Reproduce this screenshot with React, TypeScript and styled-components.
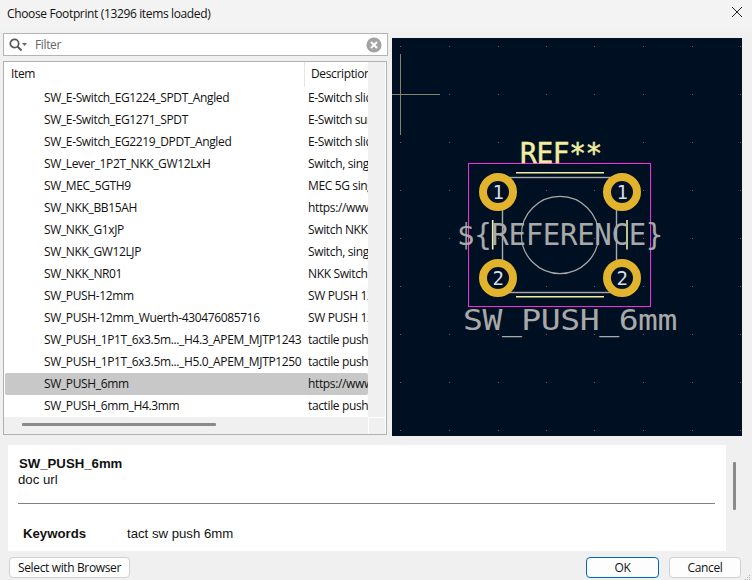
import React from 'react';
import styled, { createGlobalStyle } from 'styled-components';

const GlobalStyle = createGlobalStyle`
  html, body {
    margin: 0;
    padding: 0;
    background: #f0f0f0;
  }
`;

const uiFont = `'Open Sans', 'Noto Sans', sans-serif`;
const strokeFont = `'DejaVu Sans Mono', 'Liberation Mono', monospace`;

const Dialog = styled.div`
  position: relative;
  width: 752px;
  height: 580px;
  overflow: hidden;
  display: flex;
  flex-direction: column;
  background: #f0f0f0;
  color: #111;
  font-family: ${uiFont};
  font-size: 12px;
  letter-spacing: -0.36px;
`;

const TitleBar = styled.div`
  height: 33px;
  flex: none;
  display: flex;
  justify-content: space-between;
  padding: 6px 10px 0 7px;
  box-sizing: border-box;
  background: linear-gradient(#f3f3f3 85%, #f0f0f0);
`;

const TitleText = styled.span`
  line-height: 15px;
`;

const CloseIcon = styled.svg`
  width: 10px;
  height: 10px;
  margin-top: 1px;
`;

const MainRow = styled.div`
  display: flex;
  padding-left: 3px;
  gap: 4px;
  flex: none;
`;

const LeftColumn = styled.div`
  width: 385px;
  display: flex;
  flex-direction: column;
  gap: 5px;
`;

const FilterBox = styled.div`
  height: 23px;
  box-sizing: border-box;
  border: 1px solid #b4b4b4;
  background: #fff;
  display: flex;
  align-items: center;
  padding: 0 5px;
`;

const FilterText = styled.span`
  margin-left: 8px;
  flex: 1;
  color: #666;
`;

const ListBox = styled.div`
  width: 384px;
  height: 374px;
  box-sizing: border-box;
  border: 1px solid #b0b0b0;
  background: #fff;
  display: grid;
  grid-template-columns: 364px 17px;
  grid-template-rows: 355px 1fr;
`;

const Table = styled.div`
  overflow: hidden;
  display: flex;
  flex-direction: column;
`;

const HeaderRow = styled.div`
  height: 25px;
  flex: none;
  display: grid;
  grid-template-columns: 300px 1fr;
  line-height: 24px;
`;

const HeaderCell = styled.div<{ $divider?: boolean }>`
  padding-left: ${(p) => (p.$divider ? '6px' : '7px')};
  border-left: ${(p) => (p.$divider ? '1px solid #e4e4e4' : 'none')};
  white-space: nowrap;
  overflow: hidden;
`;

const Row = styled.div<{ $selected?: boolean }>`
  height: 22px;
  flex: none;
  margin-left: 1px;
  display: grid;
  grid-template-columns: 303px 1fr;
  line-height: 22px;
  border-radius: 2px;
  background: ${(p) => (p.$selected ? '#c8c8c8' : 'transparent')};
`;

const NameCell = styled.div`
  padding-left: 39px;
  white-space: nowrap;
  overflow: hidden;
`;

const DescCell = styled.div`
  white-space: nowrap;
  overflow: hidden;
`;

const VerticalTrack = styled.div`
  background: #f0f0f0;
`;

const HorizontalTrack = styled.div`
  background: #f0f0f0;
  padding: 6px 0 0 18px;
`;

const HorizontalThumb = styled.div`
  width: 194px;
  height: 3px;
  border-radius: 1px;
  background: #8a8a8a;
`;

const ScrollCorner = styled.div`
  background: #f0f0f0;
  border-left: 1px solid #fff;
  border-top: 1px solid #fff;
`;

const Canvas = styled.svg`
  display: block;
  flex: none;
  margin-top: 5px;
  width: 350px;
  height: 398px;
`;

const DetailsRow = styled.div`
  margin-top: 9px;
  padding-left: 8px;
  display: flex;
  flex: none;
`;

const DetailsPanel = styled.div`
  width: 718px;
  height: 106px;
  box-sizing: border-box;
  background: #fff;
  padding: 11px 11px 0 10px;
  font-family: 'Liberation Sans', Arial, sans-serif;
  font-size: 13.2px;
  letter-spacing: 0;
`;

const DetailsTitle = styled.div`
  font-weight: 700;
  line-height: 16px;
  margin-left: 1px;
`;

const DetailsDoc = styled.div`
  line-height: 15px;
`;

const Rule = styled.hr`
  border: 0;
  height: 1px;
  background: #808080;
  margin: 16px 0 0;
`;

const KeywordRow = styled.div`
  display: flex;
  margin: 22px 0 0 5px;
  line-height: 16px;
`;

const KeywordLabel = styled.span`
  width: 104px;
  font-weight: 700;
`;

const DetailsScroll = styled.div`
  width: 3px;
  height: 48px;
  margin: 17px 0 0 7px;
  background: #8a8a8a;
  border-radius: 1px;
`;

const Footer = styled.div`
  margin-top: 6px;
  padding: 0 11px 0 9px;
  display: flex;
  gap: 10px;
  flex: none;
`;

const Button = styled.button<{ $primary?: boolean }>`
  height: 21px;
  width: ${(p) => (p.$primary ? '73px' : '72px')};
  padding: 0;
  box-sizing: border-box;
  border: 1px solid ${(p) => (p.$primary ? '#0067c0' : '#d0d0d0')};
  border-radius: 4px;
  background: #fdfdfd;
  color: #111;
  font: inherit;
  letter-spacing: inherit;
  line-height: 18px;
`;

const BrowserButton = styled(Button)`
  width: 121px;
  margin-right: auto;
`;

const Grip = styled.svg`
  position: absolute;
  right: 0;
  bottom: 0;
  width: 8px;
  height: 6px;
`;

const FOOTPRINTS: [string, string][] = [
  ['SW_E-Switch_EG1224_SPDT_Angled', 'E-Switch slide'],
  ['SW_E-Switch_EG1271_SPDT', 'E-Switch surface'],
  ['SW_E-Switch_EG2219_DPDT_Angled', 'E-Switch slide'],
  ['SW_Lever_1P2T_NKK_GW12LxH', 'Switch, single'],
  ['SW_MEC_5GTH9', 'MEC 5G single'],
  ['SW_NKK_BB15AH', 'https://www.'],
  ['SW_NKK_G1xJP', 'Switch NKK G1'],
  ['SW_NKK_GW12LJP', 'Switch, single'],
  ['SW_NKK_NR01', 'NKK Switches'],
  ['SW_PUSH-12mm', 'SW PUSH 12mm'],
  ['SW_PUSH-12mm_Wuerth-430476085716', 'SW PUSH 12mm'],
  ['SW_PUSH_1P1T_6x3.5m..._H4.3_APEM_MJTP1243', 'tactile push button'],
  ['SW_PUSH_1P1T_6x3.5m..._H5.0_APEM_MJTP1250', 'tactile push button'],
  ['SW_PUSH_6mm', 'https://www.'],
  ['SW_PUSH_6mm_H4.3mm', 'tactile push button'],
];

const GRID_X = [400, 449, 498, 546, 594, 643, 692, 740];
const GRID_Y = [46, 94, 142, 190, 238, 286, 334, 382, 430];
const PADS: [number, number, string][] = [
  [498, 192, '1'],
  [622, 192, '1'],
  [498, 278, '2'],
  [622, 278, '2'],
];

const FootprintPreview = () => (
  <Canvas viewBox="392 38 350 398">
    <rect x="392" y="38" width="350" height="398" fill="#001023" />
    {GRID_Y.map((y) =>
      GRID_X.map((x) => <rect key={`${x}-${y}`} x={x} y={y} width="1" height="1" fill="#5c6470" />),
    )}
    <path d="M400.5 54V135M392 94.5H440" stroke="#85826e" strokeWidth="1" />
    <g fill="none" stroke="#a9a9a9">
      <rect x="502.5" y="177.5" width="114" height="115" strokeWidth="1.4" />
      <circle cx="560" cy="235" r="38.6" strokeWidth="1.2" />
    </g>
    <path
      d="M516 172.7H604M516 296.7H604M492.7 220V249.5M627 220V249.5"
      stroke="#f2eda1"
      strokeWidth="1.6"
      fill="none"
    />
    {PADS.map(([x, y, label], i) => (
      <g key={i}>
        <circle cx={x} cy={y} r="15" fill="#001023" stroke="#e2b32c" strokeWidth="8" />
        <text x={x} y={y + 7} textAnchor="middle" fontFamily={strokeFont} fontSize="19" fill="#d6dde6">
          {label}
        </text>
      </g>
    ))}
    <rect x="468.5" y="163.5" width="182" height="143" fill="none" stroke="#ff26e2" strokeWidth="1" />
    <text
      x="520"
      y="163"
      textLength="82"
      lengthAdjust="spacingAndGlyphs"
      fontFamily={strokeFont}
      fontSize="29"
      fill="#f2eda1"
      stroke="#f2eda1"
      strokeWidth="0.5"
    >
      REF**
    </text>
    <text
      x="457"
      y="245"
      textLength="206"
      lengthAdjust="spacingAndGlyphs"
      fontFamily={strokeFont}
      fontSize="31"
      fill="#a9a9a9"
    >
      {'${REFERENCE}'}
    </text>
    <text
      x="463"
      y="329.5"
      textLength="214"
      lengthAdjust="spacingAndGlyphs"
      fontFamily={strokeFont}
      fontSize="27.5"
      fill="#a9a9a9"
    >
      SW_PUSH_6mm
    </text>
  </Canvas>
);

const App = () => (
  <Dialog>
    <GlobalStyle />
    <TitleBar>
      <TitleText>Choose Footprint (13296 items loaded)</TitleText>
      <CloseIcon viewBox="0 0 10 10">
        <path d="M0 0L10 10M10 0L0 10" stroke="#222" strokeWidth="1" fill="none" />
      </CloseIcon>
    </TitleBar>
    <MainRow>
      <LeftColumn>
        <FilterBox>
          <svg width="18" height="14" viewBox="0 0 18 14">
            <circle cx="5.5" cy="5.5" r="4.2" fill="none" stroke="#555" strokeWidth="1.7" />
            <path d="M8.6 8.6L12.5 12.5" stroke="#555" strokeWidth="2" />
            <path d="M13 5H18L15.5 8Z" fill="#666" />
          </svg>
          <FilterText>Filter</FilterText>
          <svg width="16" height="16" viewBox="0 0 16 16">
            <circle cx="8" cy="8" r="7.6" fill="#a3a3a3" />
            <path d="M5 5L11 11M11 5L5 11" stroke="#fff" strokeWidth="2" />
          </svg>
        </FilterBox>
        <ListBox>
          <Table>
            <HeaderRow>
              <HeaderCell>Item</HeaderCell>
              <HeaderCell $divider>Description</HeaderCell>
            </HeaderRow>
            {FOOTPRINTS.map(([name, desc]) => (
              <Row key={name} $selected={name === 'SW_PUSH_6mm'}>
                <NameCell>{name}</NameCell>
                <DescCell>{desc}</DescCell>
              </Row>
            ))}
          </Table>
          <VerticalTrack />
          <HorizontalTrack>
            <HorizontalThumb />
          </HorizontalTrack>
          <ScrollCorner />
        </ListBox>
      </LeftColumn>
      <FootprintPreview />
    </MainRow>
    <DetailsRow>
      <DetailsPanel>
        <DetailsTitle>SW_PUSH_6mm</DetailsTitle>
        <DetailsDoc>doc url</DetailsDoc>
        <Rule />
        <KeywordRow>
          <KeywordLabel>Keywords</KeywordLabel>
          <span>tact sw push 6mm</span>
        </KeywordRow>
      </DetailsPanel>
      <DetailsScroll />
    </DetailsRow>
    <Footer>
      <BrowserButton>Select with Browser</BrowserButton>
      <Button $primary>OK</Button>
      <Button>Cancel</Button>
    </Footer>
    <Grip viewBox="0 0 8 6">
      <path d="M5 1h1v1H5zM3 3h1v1H3zM5 3h1v1H5zM1 5h1v1H1zM3 5h1v1H3zM5 5h1v1H5z" fill="#b5b5b5" />
    </Grip>
  </Dialog>
);

export default App;
